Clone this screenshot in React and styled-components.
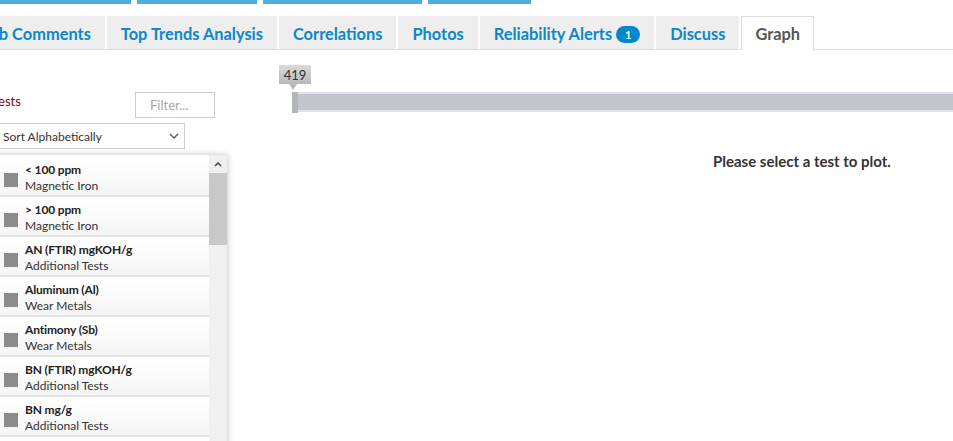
import React from "react";
import styled, { createGlobalStyle } from "styled-components";

const GlobalStyle = createGlobalStyle`
  html, body { margin: 0; padding: 0; background: #fff; }
  body { font-family: Lato, "Open Sans", sans-serif; overflow: hidden; }
  * { box-sizing: border-box; }
`;

const Page = styled.div`
  width: 953px;
  height: 441px;
  overflow: hidden;
  position: relative;
`;

const TopBars = styled.div`
  display: flex;
  gap: 6px;
  height: 4px;
`;

const TopBar = styled.div`
  width: ${(p) => p.$w}px;
  height: 4px;
  background: #52afd9;
`;

const TabBar = styled.div`
  display: flex;
  gap: 2px;
  margin-top: 12px;
  margin-left: -32px;
  width: 1010px;
  border-bottom: 1px solid #dddddd;
`;

const Tab = styled.div`
  padding: 0 13px;
  display: flex;
  align-items: center;
  background: ${(p) => (p.$active ? "#fff" : "#eeeeee")};
  border: 1px solid ${(p) => (p.$active ? "#dddddd" : "#eeeeee")};
  border-bottom: none;
  margin-bottom: ${(p) => (p.$active ? "-1px" : "0")};
  height: ${(p) => (p.$active ? "34px" : "33px")};
  color: ${(p) => (p.$active ? "#555555" : "#0d87c9")};
  font-size: 16.4px;
  font-weight: 700;
  white-space: nowrap;
`;

const Badge = styled.span`
  display: inline-flex;
  align-items: center;
  justify-content: center;
  margin-left: 4px;
  width: 24px;
  height: 17px;
  border-radius: 9px;
  background: #0088cc;
  color: #fff;
  font-size: 11px;
  font-weight: 700;
  margin-top: 3px;
`;

const Body = styled.div`
  display: flex;
`;

const LeftPanel = styled.div`
  width: 235px;
  margin-left: -8px;
  padding-top: 42px;
  flex-shrink: 0;
`;

const HeaderRow = styled.div`
  display: flex;
  justify-content: space-between;
  align-items: flex-start;
  padding-right: 12px;
`;

const TestsLabel = styled.div`
  font-size: 13px;
  color: #850505;
  padding-top: 1px;
`;

const FilterInput = styled.input`
  width: 80px;
  height: 26px;
  border: 1px solid #cccccc;
  padding: 0 0 0 14px;
  font-family: inherit;
  font-size: 13px;
  color: #333;
  outline: none;
  &::placeholder { color: #a8a8a8; }
`;

const SelectBox = styled.div`
  margin-top: 5px;
  width: 193px;
  height: 26px;
  border: 1px solid #cccccc;
  display: flex;
  align-items: center;
  justify-content: space-between;
  padding: 0 5px 0 10px;
  font-size: 12px;
  color: #333;
`;

const ListBox = styled.div`
  margin-top: 6px;
  display: flex;
  width: 235px;
  height: 300px;
  box-shadow: 0 0 6px rgba(0, 0, 0, 0.28);
  padding-top: 2px;
  background: #fff;
`;

const Items = styled.div`
  width: 217px;
  flex-shrink: 0;
`;

const Item = styled.div`
  height: 40px;
  display: flex;
  border-bottom: 2px solid #e4e4e4;
  background: linear-gradient(#ffffff, #f5f5f5);
`;

const CheckBox = styled.div`
  width: 14px;
  height: 14px;
  background: #8c8c8c;
  margin: 16px 7px 0 12px;
  flex-shrink: 0;
`;

const ItemText = styled.div`
  padding-top: 5px;
  font-size: 12px;
  line-height: 16px;
  color: #222;
`;

const ItemTitle = styled.div`
  font-weight: 700;
  letter-spacing: -0.15px;
`;

const ItemSub = styled.div`
  color: #333;
`;

const ScrollBar = styled.div`
  width: 18px;
  margin-top: -2px;
  background: #f0f0f0;
  display: flex;
  flex-direction: column;
`;

const ScrollArrow = styled.div`
  height: 18px;
  display: flex;
  align-items: center;
  justify-content: center;
  background: #f0f0f0;
`;

const ScrollThumb = styled.div`
  height: 72px;
  background: #c8c8c8;
`;

const RightPanel = styled.div`
  flex: 1;
  padding-left: 52px;
  padding-top: 15px;
`;

const SliderWrap = styled.div`
  position: relative;
  width: 700px;
`;

const ValueLabel = styled.div`
  position: relative;
  width: 32px;
  height: 19px;
  background: linear-gradient(#dadada, #b9b9b9);
  color: #333;
  font-size: 13px;
  display: flex;
  align-items: center;
  justify-content: center;
  &::after {
    content: "";
    position: absolute;
    left: 10px;
    top: 19px;
    border-left: 4px solid transparent;
    border-right: 4px solid transparent;
    border-top: 6px solid #b9b9b9;
  }
`;

const Track = styled.div`
  position: relative;
  margin-top: 8px;
  margin-left: 13px;
  height: 20px;
  background: #c5c5cf;
  border-top: 2px solid #e3e3e9;
  border-bottom: 2px solid #e3e3e9;
`;

const Handle = styled.div`
  position: absolute;
  left: 0;
  top: -2px;
  width: 6px;
  height: 21px;
  background: #b5b5bd;
`;

const Message = styled.div`
  margin-top: 40px;
  padding-left: 434px;
  font-size: 15px;
  font-weight: 700;
  color: #333;
  line-height: 18px;
  white-space: nowrap;
`;

const tabs = [
  { label: "Lab Comments" },
  { label: "Top Trends Analysis" },
  { label: "Correlations" },
  { label: "Photos" },
  { label: "Reliability Alerts", badge: 1 },
  { label: "Discuss" },
  { label: "Graph", active: true },
];

const items = [
  ["< 100 ppm", "Magnetic Iron"],
  ["> 100 ppm", "Magnetic Iron"],
  ["AN (FTIR) mgKOH/g", "Additional Tests"],
  ["Aluminum (Al)", "Wear Metals"],
  ["Antimony (Sb)", "Wear Metals"],
  ["BN (FTIR) mgKOH/g", "Additional Tests"],
  ["BN mg/g", "Additional Tests"],
  ["Boron (B)", "Additives"],
];

export default function App() {
  return (
    <Page>
      <GlobalStyle />
      <TopBars>
        <TopBar $w={131} />
        <TopBar $w={120} />
        <TopBar $w={159} />
        <TopBar $w={103} />
      </TopBars>
      <TabBar>
        {tabs.map((t) => (
          <Tab key={t.label} $active={t.active}>
            {t.label}
            {t.badge && <Badge>{t.badge}</Badge>}
          </Tab>
        ))}
      </TabBar>
      <Body>
        <LeftPanel>
          <HeaderRow>
            <TestsLabel>Tests</TestsLabel>
            <FilterInput placeholder="Filter..." />
          </HeaderRow>
          <SelectBox>
            <span>Sort Alphabetically</span>
            <svg width="10" height="6" viewBox="0 0 10 6">
              <path d="M1 1l4 4 4-4" fill="none" stroke="#555" strokeWidth="1.3" />
            </svg>
          </SelectBox>
          <ListBox>
            <Items>
              {items.map(([title, sub]) => (
                <Item key={title}>
                  <CheckBox />
                  <ItemText>
                    <ItemTitle>{title}</ItemTitle>
                    <ItemSub>{sub}</ItemSub>
                  </ItemText>
                </Item>
              ))}
            </Items>
            <ScrollBar>
              <ScrollArrow>
                <svg width="8" height="5" viewBox="0 0 8 5">
                  <path d="M1 4l3-3 3 3" fill="none" stroke="#444" strokeWidth="1.5" />
                </svg>
              </ScrollArrow>
              <ScrollThumb />
            </ScrollBar>
          </ListBox>
        </LeftPanel>
        <RightPanel>
          <SliderWrap>
            <ValueLabel>419</ValueLabel>
            <Track>
              <Handle />
            </Track>
          </SliderWrap>
          <Message>Please select a test to plot.</Message>
        </RightPanel>
      </Body>
    </Page>
  );
}
